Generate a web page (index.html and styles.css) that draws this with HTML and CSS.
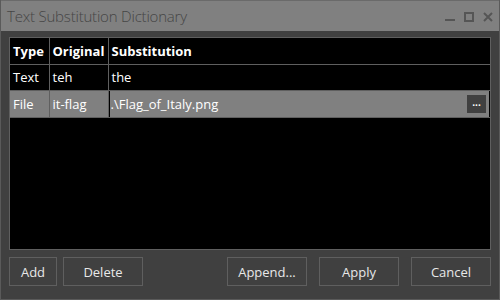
FILE: index.html
```html
<!DOCTYPE html>
<html lang="en">
<head>
    <meta charset="UTF-8">
    <title>Text Substitution Dictionary</title>
    <link rel="stylesheet" href="styles.css">
</head>
<body>
    <div class="window">
        <div class="titlebar">
            <span class="title">Text Substitution Dictionary</span>
            <div class="controls">
                <svg width="10" height="10" viewBox="0 0 10 10"><rect x="0" y="7" width="10" height="2" fill="#555"/></svg>
                <svg width="10" height="10" viewBox="0 0 10 10"><rect x="1" y="1" width="8" height="8" fill="none" stroke="#555" stroke-width="2"/></svg>
                <svg width="10" height="10" viewBox="0 0 10 10"><path d="M1 1 L9 9 M9 1 L1 9" stroke="#555" stroke-width="2"/></svg>
            </div>
        </div>

        <div class="content">
            <div class="grid">
                <table>
                    <thead>
                        <tr>
                            <th class="col-type">Type</th>
                            <th class="col-orig">Original</th>
                            <th>Substitution</th>
                        </tr>
                    </thead>
                    <tbody>
                        <tr>
                            <td>Text</td>
                            <td>teh</td>
                            <td>the</td>
                        </tr>
                        <tr class="selected">
                            <td>File</td>
                            <td>it-flag</td>
                            <td class="editing">
                                <div class="editor">
                                    <span>.\Flag_of_Italy.png</span>
                                    <button class="browse" type="button">...</button>
                                </div>
                            </td>
                        </tr>
                    </tbody>
                </table>
            </div>

            <div class="actions">
                <div class="group">
                    <button class="btn btn-add" type="button">Add</button>
                    <button class="btn btn-wide" type="button">Delete</button>
                </div>
                <div class="group group-right">
                    <button class="btn btn-wide" type="button">Append...</button>
                    <button class="btn btn-wide" type="button">Apply</button>
                    <button class="btn btn-wide" type="button">Cancel</button>
                </div>
            </div>
        </div>
    </div>
</body>
</html>
```

FILE: styles.css
```css
:root {
    --title-bg: #808080;
    --body-bg: #404040;
    --line: #5f5f5f;
    --text: #ffffff;
}

* {
    box-sizing: border-box;
}

body {
    margin: 0;
    font-family: 'Open Sans', 'Noto Sans', sans-serif;
    background: var(--body-bg);
}

.window {
    width: 500px;
    height: 300px;
    border: 1px solid #5a5a5a;
    border-top: none;
    background: var(--body-bg);
    display: flex;
    flex-direction: column;
}

.titlebar {
    height: 31px;
    background: var(--title-bg);
    border-top: 1px solid #6a6a6a;
    display: flex;
    align-items: center;
    justify-content: space-between;
    padding: 0 6px 0 6px;
}

.title {
    color: #454545;
    font-size: 15px;
    font-weight: 300;
    letter-spacing: -0.2px;
}

.controls {
    display: flex;
    gap: 9px;
    margin-top: 2px;
}

.content {
    flex: 1;
    padding: 6px 8px 0 8px;
    display: flex;
    flex-direction: column;
}

.grid {
    height: 213px;
    background: #000;
    border: 1px solid var(--line);
}

table {
    width: 100%;
    border-collapse: collapse;
    color: var(--text);
    font-size: 13px;
}

th, td {
    height: 26px;
    padding: 0 3px;
    text-align: left;
    border-right: 1px solid var(--line);
    border-bottom: 1px solid var(--line);
    white-space: nowrap;
}

th:last-child, td:last-child {
    border-right: none;
}

th {
    font-weight: 700;
}

.col-type {
    width: 39px;
}

.col-orig {
    width: 59px;
}

.selected td {
    background: #808080;
}

td.editing {
    padding: 0;
}

.editor {
    height: 26px;
    border-left: 1px solid #000;
    border-right: 1px solid #000;
    display: flex;
    align-items: center;
    justify-content: space-between;
    padding: 0 3px 0 1px;
}

.browse {
    width: 19px;
    height: 18px;
    border: none;
    background: #404040;
    color: #fff;
    font-family: inherit;
    font-size: 10px;
    font-weight: 700;
    padding: 0 0 4px 0;
    line-height: 1;
}

.actions {
    display: flex;
    justify-content: space-between;
    margin-top: 7px;
}

.group {
    display: flex;
    gap: 6px;
}

.group-right {
    gap: 12px;
}

.btn {
    height: 29px;
    background: var(--body-bg);
    border: 1px solid var(--line);
    color: #e8e8e8;
    font-family: inherit;
    font-size: 13px;
    padding: 0;
}

.btn-add {
    width: 48px;
}

.btn-wide {
    width: 80px;
}
```
